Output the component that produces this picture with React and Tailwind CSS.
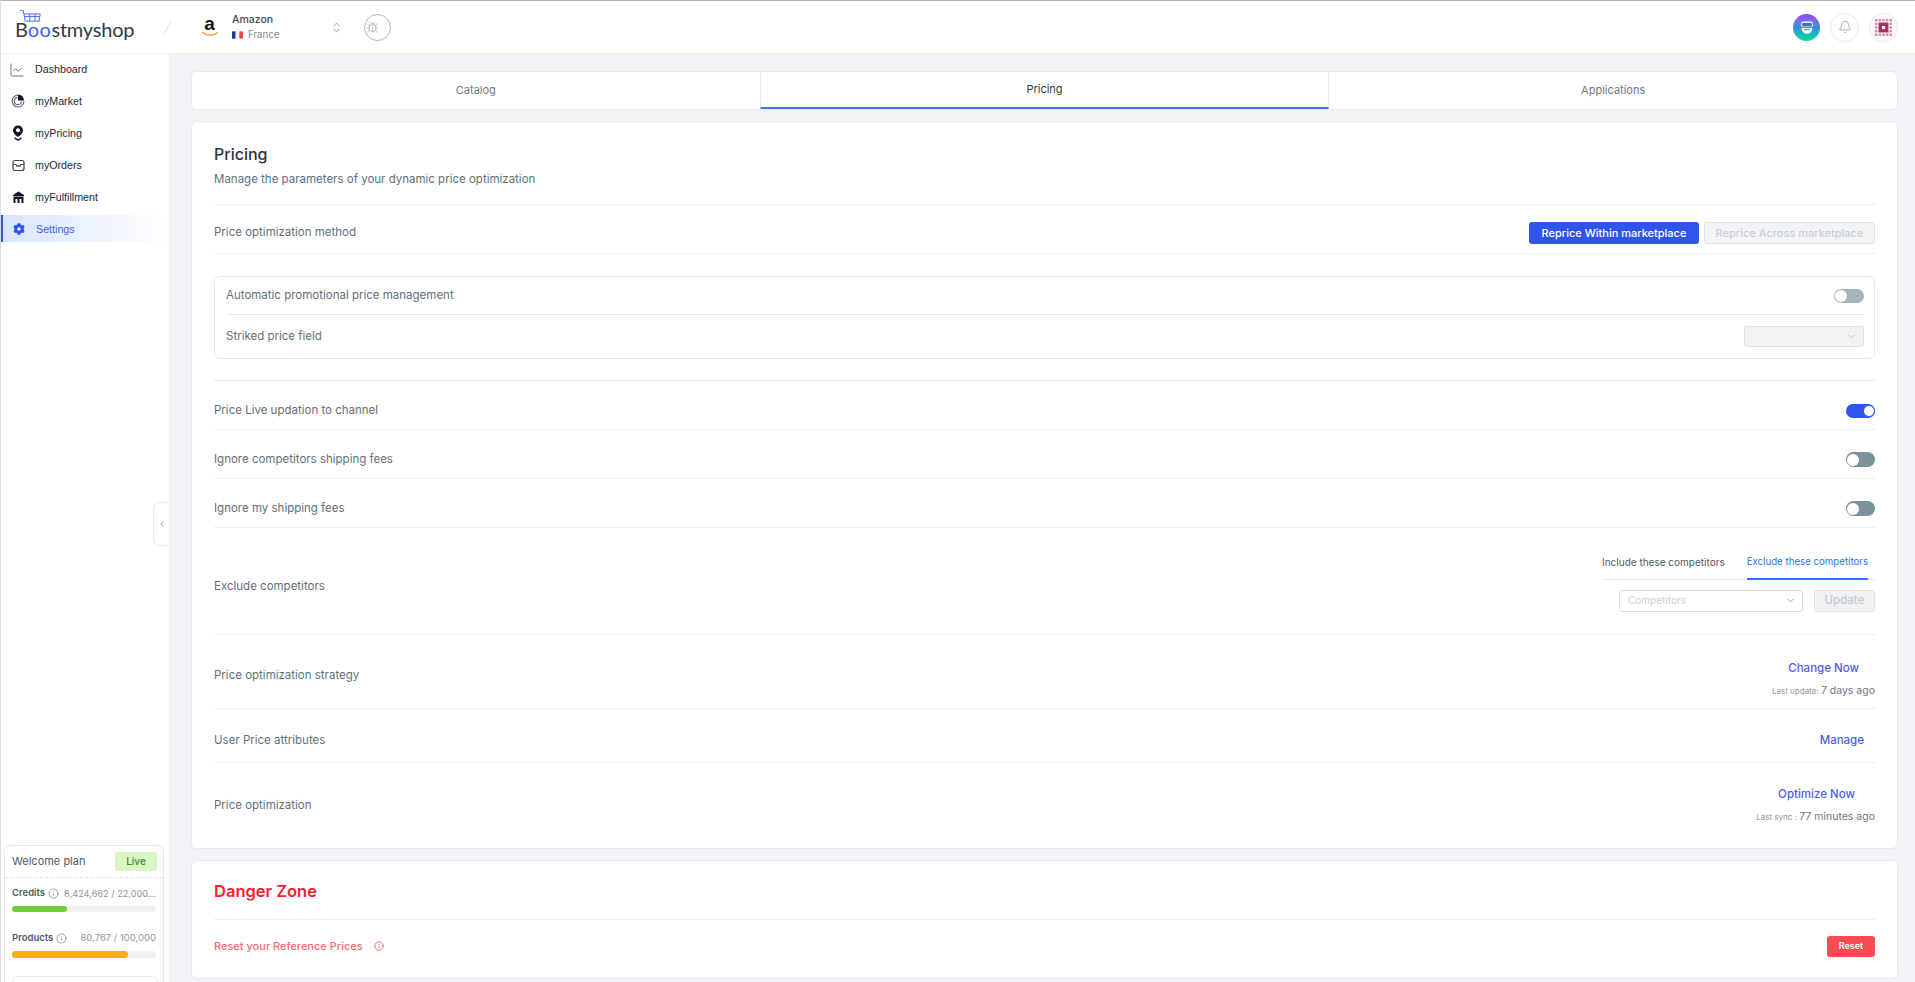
import { Bug, ChevronDown, ChevronLeft, ChevronsUpDown, Bell, Info, ChartLine } from "lucide-react";
import { RiSettings3Fill } from "react-icons/ri";

function MarketIcon() {
  return (
    <svg width="14" height="14" viewBox="0 0 14 14" fill="none">
      <path d="M7 1.2a5.900 5.900 0 1 0 5.900 6" stroke="#6b7280" strokeWidth="1.2" />
      <path d="M6.600 3.600a3.500 3.500 0 1 0 3.700 3.600" stroke="#6b7280" strokeWidth="1.2" />
      <path d="M7 .6a6 6 0 0 1 6 6H7z" fill="#111827" />
    </svg>
  );
}

function PricingIcon() {
  return (
    <svg width="12" height="16" viewBox="0 0 12 16" fill="none">
      <path d="M6 .5a5 5 0 0 1 5 5c0 2.600-2.200 4.400-5 6.400-2.800-2-5-3.800-5-6.400a5 5 0 0 1 5-5z" fill="#0f172a" />
      <circle cx="6" cy="5.200" r="2" fill="#fff" />
      <path d="M2.500 12.800c1 .8 2.200 1.600 3.500 2.400 1.300-.8 2.500-1.600 3.500-2.400" stroke="#0f172a" strokeWidth="1.4" />
    </svg>
  );
}

function OrdersIcon() {
  return (
    <svg width="13" height="13" viewBox="0 0 13 13" fill="none" stroke="#374151" strokeWidth="1.2">
      <rect x="1" y="1.500" width="11" height="10" rx="2" />
      <path d="M1 5.500h3l1 1.600h3l1-1.600h3" />
    </svg>
  );
}

function FulfillmentIcon() {
  return (
    <svg width="13" height="13" viewBox="0 0 13 13">
      <path d="M6.500.5 12 4v1H1V4z" fill="#111827" />
      <path d="M1.500 5.500h10V12h-10z" fill="#111827" />
      <rect x="3.500" y="8" width="2" height="4" fill="#fff" />
      <rect x="7.500" y="8" width="2" height="4" fill="#fff" />
    </svg>
  );
}

function NavItem({ icon, label, active }) {
  return (
    <div
      className={
        active
          ? "flex h-[27px] items-center border-l-2 border-[#3056e8] bg-gradient-to-r from-[#d9e5ff] to-white text-[#3f5ee8]"
          : "flex h-[27px] items-center text-[#1c2a3a]"
      }
    >
      <div className={active ? "flex w-[33px] justify-center pr-[2px]" : "flex w-[34px] justify-center"}>{icon}</div>
      <span className="font-['Liberation_Sans',sans-serif] text-[10.700px]">{label}</span>
    </div>
  );
}

function Toggle({ on, light }) {
  if (on) {
    return (
      <div className="flex h-[14px] w-[29px] items-center justify-end rounded-full bg-[#2f55ec]">
        <div className="h-[12px] w-[12px] rounded-full border border-[#2f55ec] bg-white" />
      </div>
    );
  }
  return (
    <div className={light ? "flex h-[14px] w-[30px] items-center rounded-full bg-[#a5b4ba]" : "flex h-[15px] w-[29px] items-center rounded-full bg-[#7b919c]"}>
      <div className="ml-[1px] h-[12px] w-[12px] rounded-full bg-white" />
    </div>
  );
}

function BotAvatar() {
  return (
    <div className="flex h-[27px] w-[27px] items-center justify-center rounded-full bg-gradient-to-b from-[#9a3df0] via-[#2f8fe0] to-[#16e08f]">
      <svg width="16" height="17" viewBox="0 0 16 17">
        <path d="M4 2.500h8a2 2 0 0 1 2 2v3H2v-3a2 2 0 0 1 2-2z" fill="#e8f0ff" />
        <rect x="3" y="4" width="10" height="3" rx="1" fill="#3b6fd8" />
        <path d="M2.500 9h11c0 3-2.500 6-5.500 6s-5.500-3-5.500-6z" fill="#e8f7f5" />
        <rect x="5" y="10" width="6" height="1" fill="#3aa8c8" />
      </svg>
    </div>
  );
}

function ChipIcon() {
  const dots = [];
  for (let i = 0; i < 5; i++) {
    for (let j = 0; j < 5; j++) {
      dots.push(<rect key={i + "-" + j} x={i * 3.2} y={j * 3.2} width="2.2" height="2.2" fill="#d88aa6" />);
    }
  }
  return (
    <svg width="17" height="17" viewBox="0 0 15 15">
      {dots}
      <rect x="3.200" y="3.200" width="8.600" height="8.600" fill="#a92d60" />
      <rect x="6.200" y="6.200" width="2.800" height="2.800" fill="#fff" />
    </svg>
  );
}

export default function App() {
  return (
    <div className="flex h-screen flex-col overflow-hidden border-t border-l border-t-[#b4b4b4] border-l-[#dcdcdc] bg-[#f3f4f9] font-['Inter',sans-serif]">
      {/* top bar */}
      <header className="flex h-[53px] shrink-0 items-center border-b border-[#eef0f6] bg-white pr-[17px]">
        <div className="relative ml-[14px] w-[134px] pt-[8px]">
          <svg className="absolute -top-[1px] left-[4px]" width="32" height="17" viewBox="0 0 48 26" fill="none" stroke="#3f63ea" strokeWidth="1.4">
            <path d="M1 1h5l3 16h23" />
            <path d="M7 6h25l-2 11" />
            <path d="M8 10h23M16 6v11M24 6v11" />
          </svg>
          <span className="font-['Lato',sans-serif] text-[20px] leading-none tracking-[-0.2px] text-[#2f3b45]">
            B<span className="tracking-[0.5px] text-[#3f63ea]">oo</span>stmyshop
          </span>
        </div>
        <div className="ml-[18px] h-[15px] w-px rotate-[30deg] bg-[#e3e6ec]" />
        <div className="relative ml-[32px] flex h-[26px] w-[19px] flex-col items-center">
          <span className="font-['Liberation_Sans',sans-serif] text-[19px] leading-[20px] font-bold text-[#111]">a</span>
          <svg className="absolute top-[17px]" width="18" height="6" viewBox="0 0 18 6" fill="none">
            <path d="M1 1c5 4 11 4 16 .5" stroke="#f59e2c" strokeWidth="1.500" />
          </svg>
        </div>
        <div className="ml-[13px] w-[96px]">
          <div className="text-[10.500px] leading-[14px] font-medium text-[#3d4a55]">Amazon</div>
          <div className="mt-[1px] flex items-center gap-[5px] text-[9.700px] leading-[14px] text-[#7d8a94]">
            <svg width="11" height="8" viewBox="0 0 3 2">
              <rect width="1" height="2" fill="#1f3a93" />
              <rect x="1" width="1" height="2" fill="#f5f5f5" />
              <rect x="2" width="1" height="2" fill="#ef4444" />
            </svg>
            France
          </div>
        </div>
        <ChevronsUpDown size={13} strokeWidth={1.5} className="ml-[2px] text-[#7d8a94]" />
        <div className="ml-[21px] flex h-[27px] w-[27px] items-center justify-start rounded-full border border-[#a6b8c0]">
          <Bug size={13} strokeWidth={1} className="ml-[1px] text-[#8a9aa3]" />
        </div>
        <div className="ml-auto flex items-center">
          <BotAvatar />
          <div className="ml-[10px] flex h-[29px] w-[29px] items-center justify-center rounded-full border border-[#e8eaf1]">
            <Bell size={14} strokeWidth={1.3} className="text-[#8a989f]" />
          </div>
          <div className="ml-[10px] flex h-[29px] w-[29px] items-center justify-center rounded-full border border-[#e8eaf1]">
            <ChipIcon />
          </div>
        </div>
      </header>

      <div className="flex min-h-0 flex-1">
        {/* sidebar */}
        <aside className="relative flex w-[168px] shrink-0 flex-col bg-white">
          <nav className="flex flex-1 flex-col gap-[4.900px] pt-[2px]">
            <NavItem icon={<ChartLine size={16} strokeWidth={1.1} className="mr-[2px] text-[#374151]" />} label="Dashboard" />
            <NavItem icon={<MarketIcon />} label="myMarket" />
            <NavItem icon={<PricingIcon />} label="myPricing" />
            <NavItem icon={<OrdersIcon />} label="myOrders" />
            <NavItem icon={<FulfillmentIcon />} label="myFulfillment" />
            <NavItem active icon={<RiSettings3Fill size={14} className="text-[#3056e8]" />} label="Settings" />
          </nav>

          <div className="ml-[3px] h-[137px] w-[160px] shrink-0 rounded-t-md border border-b-0 border-[#e6e9f1] bg-white">
            <div className="flex h-[32px] items-center justify-between border-b border-dashed border-[#dfe3ea] pr-[6px] pl-[7px]">
              <span className="text-[11px] text-[#4e5c68]">Welcome plan</span>
              <span className="flex h-[19px] w-[42px] items-center justify-center rounded-[2px] bg-[#d9f7c3] text-[10px] font-medium text-[#3f8a2a]">Live</span>
            </div>
            <div className="px-[7px] pt-[8px]">
              <div className="flex h-[15px] items-center">
                <span className="text-[9.500px] font-semibold text-[#4e5c68]">Credits</span>
                <Info size={11} strokeWidth={1.3} className="ml-[3px] shrink-0 text-[#5f6b75]" />
                <span className="ml-[5px] truncate text-[9.200px] text-[#8b969f]">8,424,662 / 22,000,000</span>
              </div>
              <div className="mt-[5px] h-[6px] rounded-full bg-[#f0f0f0]">
                <div className="h-full w-[38%] rounded-full bg-[#6fcf3a]" />
              </div>
              <div className="mt-[19px] flex h-[15px] items-center justify-between">
                <span className="flex items-center">
                  <span className="text-[9.500px] font-semibold text-[#4e5c68]">Products</span>
                  <Info size={11} strokeWidth={1.3} className="ml-[3px] text-[#5f6b75]" />
                </span>
                <span className="text-[9.500px] text-[#8b969f]">80,767 / 100,000</span>
              </div>
              <div className="mt-[5px] h-[7px] rounded-full bg-[#f0f0f0]">
                <div className="h-full w-[80.700%] rounded-full bg-[#fdab1a]" />
              </div>
              <div className="mt-[18px] h-[20px] w-[146px] rounded-t-md border border-[#e6e9f1]" />
            </div>
          </div>

          <div className="absolute top-[448px] left-[152px] flex h-[44px] w-[16px] items-center justify-center rounded-l-md border border-r-0 border-[#e9ecf3] bg-white">
            <ChevronLeft size={10} className="text-[#8d99a2]" />
          </div>
        </aside>

        {/* main */}
        <main className="flex min-w-0 flex-1 flex-col gap-[11px] pt-[17px] pr-[17px] pl-[22px]">
          <div className="flex h-[39px] shrink-0 rounded-md border border-[#e7eaf1] bg-white text-[11px] text-[#6b7a86]">
            <div className="flex flex-1 items-center justify-center">Catalog</div>
            <div className="flex flex-1 items-center justify-center border-x border-b-2 border-x-[#e7eaf1] border-b-[#4a6cf0] text-[#2f3d48]">Pricing</div>
            <div className="flex flex-1 items-center justify-center">Applications</div>
          </div>

          <section className="shrink-0 rounded-md border border-[#e7eaf1] bg-white px-[22px] text-[11.500px] text-[#5f6f7c]">
            <div className="h-[83px] border-b border-[#eceef3] pt-[20px]">
              <h1 className="text-[16px] leading-[24px] font-medium text-[#27343f]">Pricing</h1>
              <p className="mt-[5px] text-[11.500px] leading-[16px]">Manage the parameters of your dynamic price optimization</p>
            </div>
            <div className="flex h-[49px] items-center justify-between border-b border-[#eceef3] pt-[8px]">
              <span>Price optimization method</span>
              <div className="flex gap-[5px] text-[11px] font-medium">
                <button className="h-[22px] w-[170px] rounded-[3px] bg-[#2f55ec] text-white">Reprice Within marketplace</button>
                <button className="h-[22px] w-[171px] rounded-[3px] border border-[#dfe1e6] bg-[#f3f4f6] text-[#c9ced6]">Reprice Across marketplace</button>
              </div>
            </div>

            <div className="mt-[22px] h-[83px] rounded-md border border-[#e5e9f0] pr-[10px] pl-[11px]">
              <div className="flex h-[38px] items-center justify-between border-b border-[#e5e9f0]">
                <span>Automatic promotional price management</span>
                <Toggle light />
              </div>
              <div className="flex h-[43px] items-center justify-between">
                <span>Striked price field</span>
                <div className="flex h-[21px] w-[120px] items-center justify-end rounded-[3px] border border-[#dddfe3] bg-[#f3f3f3] pr-[6px]">
                  <ChevronDown size={11} className="text-[#b4b9bf]" />
                </div>
              </div>
            </div>

            <div className="mt-[21px] border-t border-[#e5e8ef]" />
            <div className="flex h-[49px] items-center justify-between border-b border-[#eceef3] pt-[11px]">
              <span>Price Live updation to channel</span>
              <Toggle on />
            </div>
            <div className="flex h-[49px] items-center justify-between border-b border-[#eceef3] pt-[11px]">
              <span>Ignore competitors shipping fees</span>
              <Toggle />
            </div>
            <div className="flex h-[49px] items-center justify-between border-b border-[#eceef3] pt-[11px]">
              <span>Ignore my shipping fees</span>
              <Toggle />
            </div>

            <div className="flex h-[107px] items-center justify-between border-b border-[#eceef3]">
              <span className="pt-[12px]">Exclude competitors</span>
              <div className="flex w-[273px] flex-col">
                <div className="flex h-[29px] gap-[22px] border-b border-[#e8eaef] text-[10px]">
                  <span className="flex h-full items-center pb-[4px] text-[#4f5a64]">Include these competitors</span>
                  <span className="-mb-px flex h-[29px] items-center border-b-2 border-[#1f75ff] pb-[4px] text-[9.700px] text-[#1f75ff]">Exclude these competitors</span>
                </div>
                <div className="mt-[10px] flex justify-end gap-[11px]">
                  <div className="flex h-[22px] w-[184px] items-center justify-between rounded-[3px] border border-[#dcdee3] pr-[6px] pl-[8px] text-[10px] text-[#c9ced6]">
                    Competitors
                    <ChevronDown size={11} className="text-[#8f979f]" />
                  </div>
                  <button className="h-[22px] w-[61px] rounded-[3px] border border-[#dfe1e6] bg-[#f0f1f3] text-[11.500px] font-medium text-[#c2c7ce]">Update</button>
                </div>
              </div>
            </div>

            <div className="flex h-[74px] items-center justify-between border-b border-[#eceef3] pt-[8px]">
              <span>Price optimization strategy</span>
              <div className="flex flex-col items-end pt-[8px]">
                <span className="mr-[16px] font-medium text-[#4a5cf0]">Change Now</span>
                <span className="mt-[6px] text-[10.500px] text-[#6b7680]">
                  <span className="text-[8px] text-[#8c96a0]">Last update: </span>7 days ago
                </span>
              </div>
            </div>
            <div className="flex h-[54px] items-center justify-between border-b border-[#eceef3] pt-[10px]">
              <span>User Price attributes</span>
              <span className="mr-[11px] font-medium text-[#4a5cf0]">Manage</span>
            </div>
            <div className="flex h-[85px] items-center justify-between">
              <span>Price optimization</span>
              <div className="flex flex-col items-end">
                <span className="mr-[20px] font-medium text-[#4a5cf0]">Optimize Now</span>
                <span className="mt-[6px] text-[10.500px] text-[#6b7680]">
                  <span className="text-[8px] text-[#8c96a0]">Last sync : </span>77 minutes ago
                </span>
              </div>
            </div>
          </section>

          <section className="h-[119px] shrink-0 rounded-md border border-[#e7eaf1] bg-white px-[22px]">
            <div className="flex h-[59px] items-center border-b border-[#eceef3] pt-[3px]">
              <h2 className="text-[16.500px] font-semibold text-[#f7202f]">Danger Zone</h2>
            </div>
            <div className="flex h-[52px] items-center justify-between">
              <span className="flex items-center gap-[11px] text-[11px] font-medium text-[#fb6a75]">
                Reset your Reference Prices
                <Info size={10} className="text-[#f7505e]" />
              </span>
              <button className="h-[21px] w-[48px] rounded-[3px] bg-[#fb4c55] text-[9px] font-semibold text-white">Reset</button>
            </div>
          </section>
        </main>
      </div>
    </div>
  );
}
